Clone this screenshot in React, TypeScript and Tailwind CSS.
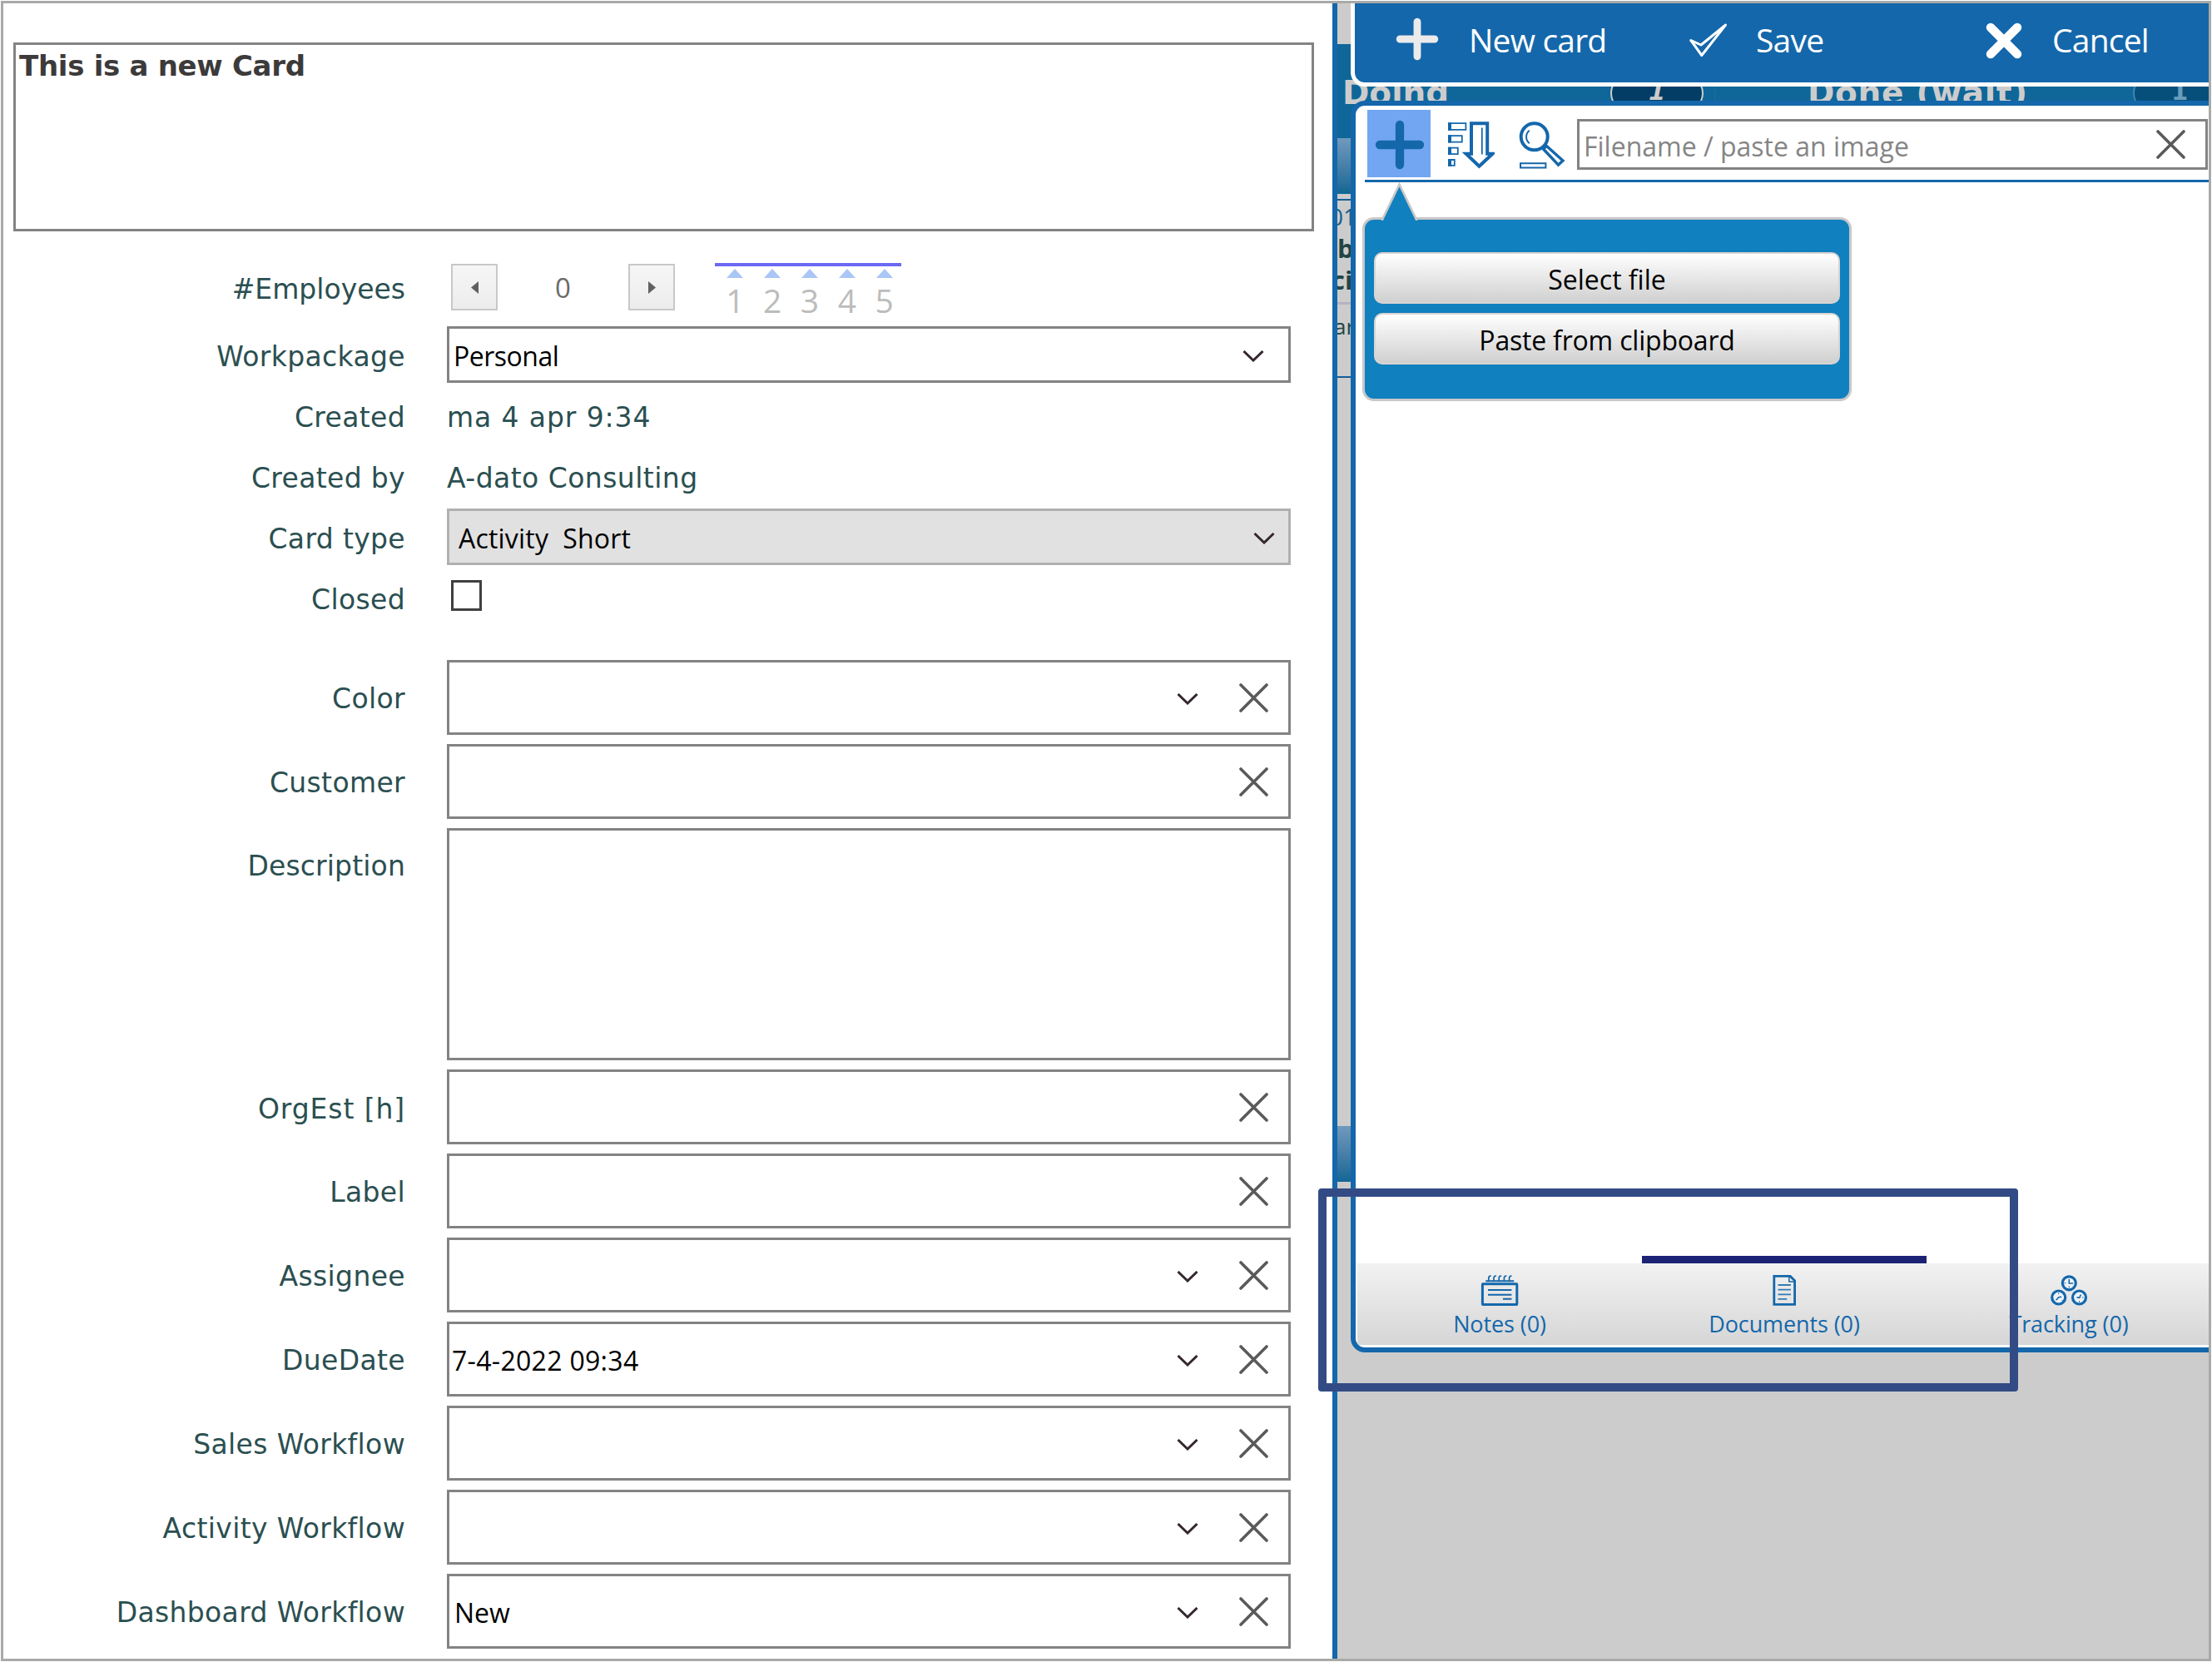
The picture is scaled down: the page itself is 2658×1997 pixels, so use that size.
import type { ReactNode } from "react";

type FieldRow = {
  label: string;
  labelClass?: string;
  value?: string;
  valueClass?: string;
  dropdown?: boolean;
  tall?: boolean;
};

const customFields: FieldRow[] = [
  { label: "Color", dropdown: true },
  { label: "Customer" },
  { label: "Description", labelClass: "h-[86px] tracking-[0.15px]", tall: true },
  { label: "OrgEst [h]", labelClass: "h-[90px] tracking-[0.9px]" },
  { label: "Label" },
  { label: "Assignee", dropdown: true },
  { label: "DueDate", value: "7-4-2022 09:34", valueClass: "pl-[3px] tracking-[0.3px]", dropdown: true },
  { label: "Sales Workflow", dropdown: true },
  { label: "Activity Workflow", dropdown: true },
  { label: "Dashboard Workflow", value: "New", valueClass: "pl-[6px]", dropdown: true },
];

function ChevronIcon() {
  return (
    <svg width="26" height="14" viewBox="0 0 26 14" fill="none" stroke="#35262f" strokeWidth="3">
      <path d="M1.5 1 13 12 24.5 1" />
    </svg>
  );
}

function ClearIcon() {
  return (
    <svg width="35" height="35" viewBox="0 0 35 35" fill="none" stroke="#5a5a5a" strokeWidth="3.6" strokeLinecap="round">
      <path d="M2 2 33 33M33 2 2 33" />
    </svg>
  );
}

function PlusIcon({ className, width }: { className: string; width: number }) {
  return (
    <svg className={className} viewBox="0 0 50 50" preserveAspectRatio="none" fill="none" stroke="currentColor" strokeWidth={width} strokeLinecap="round">
      <path d="M25 5v40M5 25h40" />
    </svg>
  );
}

function CheckIcon() {
  return (
    <svg width="46" height="41" viewBox="0 0 46 41" fill="none" stroke="#fff" strokeWidth="3" strokeLinejoin="round">
      <path d="M1.8 20.5 14 26 43.5 2 14.8 38.5Z" />
    </svg>
  );
}

function CancelIcon() {
  return (
    <svg width="44" height="44" viewBox="0 0 44 44" fill="none" stroke="#fff" strokeWidth="10.5" strokeLinecap="round">
      <path d="M6 6 38 38M38 6 6 38" />
    </svg>
  );
}

function SortIcon() {
  return (
    <svg width="58" height="60" viewBox="0 0 58 60" fill="none" stroke="#1467ab">
      <g strokeWidth="1.8">
        <path d="M3 4.2h20.4v7.6H3zM3 19.2h15.8v7.4H3zM3 33.6h10.8v7.6H3zM3 48h6.8v6.8H3z" />
      </g>
      <path strokeWidth="4" d="M4 3.3v9.4M4 18.3v9.2M4 32.7v9.4M4 47.1v8.6" />
      <path strokeWidth="4" d="M30 4.3h19.2v36.5h6.3L39.4 55.8 23.6 40.8H30z" />
      <path strokeWidth="1.8" d="M42.8 9.5v32" />
    </svg>
  );
}

function SearchIcon() {
  return (
    <svg width="58" height="60" viewBox="0 0 58 60" fill="none" stroke="#1467ab">
      <circle cx="19.7" cy="20.3" r="16" strokeWidth="4" />
      <path strokeWidth="2" d="M13.8 12.8c-5 4-5 11.5 0 15.4" />
      <path strokeWidth="3.4" d="M30.5 35 34.5 31.5 54 49 48.5 54.2z" />
      <path strokeWidth="2" d="M3 52.2h30.4v5.2H3z" />
    </svg>
  );
}

function NotesIcon() {
  return (
    <svg width="48" height="39" viewBox="0 0 48 39" fill="none" stroke="#1467ab">
      <rect x="3.4" y="11.8" width="41.4" height="24.6" rx="0.5" strokeWidth="3" />
      <path strokeWidth="2" d="M7.2 8.3h34M10 19h28.4M10 24.7h28.4M28 29.8h10.4" />
      <path
        strokeWidth="1.7"
        d="M10.8 8.5V4.6q0-2.6 3-2.6M17 8.5V4.6q0-2.6 3-2.6M23.2 8.5V4.6q0-2.6 3-2.6M29.4 8.5V4.6q0-2.6 3-2.6M35.6 8.5V4.6q0-2.6 3-2.6"
      />
    </svg>
  );
}

function DocumentIcon() {
  return (
    <svg width="31" height="39" viewBox="0 0 31 39" fill="none" stroke="#1467ab">
      <path strokeWidth="2.8" d="M2.8 2.4h19.4l5.4 5.4v28.6H2.8z" />
      <path strokeWidth="1.5" d="M20.8 3v6h6" />
      <path strokeWidth="1.8" opacity="0.85" d="M7.5 13H23M7.5 18.7H23M7.5 24.3H23M7.5 29.8h10.7" />
    </svg>
  );
}

function TrackingIcon() {
  return (
    <svg width="46" height="39" viewBox="0 0 46 39" fill="none" stroke="#1467ab">
      <g fill="#eef3f8" strokeWidth="3.2">
        <circle cx="23.3" cy="10.8" r="8" />
        <circle cx="10.7" cy="28" r="8" />
        <circle cx="35.5" cy="28" r="8" />
      </g>
      <path strokeWidth="1.6" d="M23.3 6v5h4.8M7.6 31.2l3.2-3.4 3.4-.6M32.4 28l3.4.3 1.6-3.8" />
      <path strokeWidth="1" d="M23.3 14.4v2M17.6 10.8h1.8M10.7 22.6v1.6M14.6 31l1 1M35.5 32v1.8M38.8 28h1.8" />
    </svg>
  );
}

function Label({ children, className = "h-[68px] tracking-[0.35px]" }: { children: ReactNode; className?: string }) {
  return (
    <div
      className={`flex w-[483px] shrink-0 items-center justify-end pt-[5px] font-['DejaVu_Sans',sans-serif] text-[33px] whitespace-nowrap text-[#2b4f51] ${className}`}
    >
      {children}
    </div>
  );
}

function StepButton({ direction }: { direction: "left" | "right" }) {
  return (
    <button className="flex size-14 items-center justify-center border-2 border-[#c8c8c8] bg-linear-to-b from-[#f6f6f6] to-[#ececec]">
      <svg width="9" height="15" viewBox="0 0 9 15" fill="#606060">
        <path d={direction === "left" ? "M9 0v15L0 7.5z" : "M0 0v15l9-7.5z"} />
      </svg>
    </button>
  );
}

function CardForm() {
  return (
    <section className="w-[1597px] shrink-0 bg-white font-['Open_Sans',sans-serif] text-[32px] text-black">
      <div className="mt-[47px] ml-3 h-[227px] w-[1563px] border-3 border-[#838383] pt-[5px] pl-1 font-['DejaVu_Sans',sans-serif] text-[34px] leading-10 font-bold tracking-[-0.3px] text-[#3c3a3a]">
        This is a new Card
      </div>

      <div className="mt-[39px] flex h-[75px] items-start">
        <Label className="h-14">#Employees</Label>
        <div className="ml-[55px] flex items-center">
          <StepButton direction="left" />
          <span className="w-[157px] pt-[2px] text-center text-[33px] leading-[54px] text-[#6a6a6a]">0</span>
          <StepButton direction="right" />
        </div>
        <div className="-mt-px ml-12 w-[224px] border-t-4 border-[#6b69f4]">
          <div className="mt-[3px] flex pl-[2px] text-[39px] text-[#bcbcbc]">
            {[1, 2, 3, 4, 5].map((n) => (
              <div key={n} className="flex w-[44.8px] shrink-0 flex-col items-center">
                <svg width="20" height="11" viewBox="0 0 20 11" fill="#a9c6f5">
                  <path d="M10 0 20 11H0z" />
                </svg>
                <span className="mt-[7px] leading-10">{n}</span>
              </div>
            ))}
          </div>
        </div>
      </div>

      <div className="flex flex-col gap-[5px]">
        <div className="flex">
          <Label>Workpackage</Label>
          <div className="ml-[50px] flex h-[68px] w-[1014px] items-center justify-between border-3 border-[#838383] pt-[3px] pr-[29px] pl-[5px] tracking-[-0.5px]">
            Personal
            <ChevronIcon />
          </div>
        </div>
        <div className="flex text-[#2b4f51]">
          <Label>Created</Label>
          <div className="ml-[50px] flex items-center pt-[5px] font-['DejaVu_Sans',sans-serif] text-[33px] tracking-[0.9px]">ma 4 apr 9:34</div>
        </div>
        <div className="flex text-[#2b4f51]">
          <Label>Created by</Label>
          <div className="ml-[50px] flex items-center pt-[5px] font-['DejaVu_Sans',sans-serif] text-[33px] tracking-[0.45px]">A-dato Consulting</div>
        </div>
        <div className="flex">
          <Label>Card type</Label>
          <div className="ml-[50px] flex h-[68px] w-[1014px] items-center justify-between border-3 border-[#b0b0b0] bg-[#e1e1e1] pt-[3px] pr-4 pl-[11px] tracking-[0.2px] whitespace-pre">
            {"Activity  Short"}
            <ChevronIcon />
          </div>
        </div>
        <div className="flex items-center">
          <Label>Closed</Label>
          <div className="mb-[5px] ml-[55px] size-[37px] border-3 border-[#404040]" />
        </div>
      </div>

      <div className="mt-[41px] flex flex-col gap-[11px]">
        {customFields.map(({ label, labelClass = "h-[89px] tracking-[0.35px]", value, valueClass = "", dropdown, tall }) => (
          <div key={label} className="flex">
            <Label className={labelClass}>{label}</Label>
            {tall ? (
              <div className="ml-[50px] h-[279px] w-[1014px] border-3 border-[#838383]" />
            ) : (
              <div className="ml-[50px] flex h-[90px] w-[1014px] items-center border-3 border-[#838383] pr-6">
                <span className={`flex-1 pt-[3px] ${valueClass}`}>{value}</span>
                {dropdown && (
                  <span className="mt-[3px] mr-[49px]">
                    <ChevronIcon />
                  </span>
                )}
                <ClearIcon />
              </div>
            )}
          </div>
        ))}
      </div>
    </section>
  );
}

/** Kanban board that shows through behind the docked panels. */
function BoardBackdrop() {
  return (
    <div className="col-start-1 row-start-1 flex flex-col overflow-hidden bg-[#ccc] pt-[49px] font-['DejaVu_Sans',sans-serif]">
      <div className="flex h-[113px] shrink-0 items-center bg-[#0f6699] pt-[5px] text-[39px] font-bold whitespace-nowrap text-[#ccc]">
        <div className="flex h-full w-[454px] shrink-0 items-center justify-between border-r border-[#1b6f9f] pr-[13px] pl-[6px]">
          <span>Doing</span>
          <span className="flex h-11 w-28 items-center justify-center rounded-[22px] border-2 border-[#ccc] bg-[#033d66] pb-[3px] text-[29px] italic">1</span>
        </div>
        <div className="flex shrink-0 items-center pl-[111px]">
          <span className="w-[391px] tracking-[0.7px]">Done (wait)</span>
          <span className="flex h-11 w-28 items-center justify-center rounded-[22px] border-2 border-[#3f86ae] bg-[#074f7b] pb-[3px] text-[29px] text-[#6a9dbb]">1</span>
        </div>
      </div>
      <div className="h-[67px] shrink-0 bg-linear-to-b from-[#7099bd] to-[#0f6694]" />
      <div className="mt-1.5 h-[215px] shrink-0 border-y-[2.5px] border-[#165f97] font-['Open_Sans',sans-serif] whitespace-nowrap text-[#234442]">
        <p className="-ml-[9px] text-[28px] leading-[38px] text-[#15608c]">01</p>
        <p className="text-[31px] leading-[38px] font-bold">b</p>
        <p className="-ml-[7px] text-[31px] leading-[38px] font-bold">ci</p>
        <p className="mt-2 -ml-1 border-t-[3px] border-[#b5b3c3] text-[26px] leading-[52px]">ar</p>
      </div>
      <div className="mt-[899px] h-[67px] shrink-0 bg-linear-to-b from-[#7099bd] to-[#0f6694]" />
    </div>
  );
}

function UploadMenu() {
  return (
    <div className="absolute top-[134px] left-[8px] h-[221px] w-[588px] rounded-[14px] border-[3px] border-[#c8c8c8] bg-[#1080bf] px-[11px] pt-[39px]">
      <svg className="absolute -top-[45px] left-[18px]" width="48" height="46" viewBox="0 0 48 46">
        <path d="M2.5 46 23.5 2.5 44.5 46" fill="#1080bf" stroke="#c8c8c8" strokeWidth="2.6" />
      </svg>
      <div className="flex flex-col gap-[11px] text-[32px] text-black">
        <button className="h-[62px] w-[560px] rounded-[10px] border-2 border-[#d8d4d2] bg-linear-to-b from-white to-[#d0d0d0] pt-1">Select file</button>
        <button className="h-[62px] w-[560px] rounded-[10px] border-2 border-[#d8d4d2] bg-linear-to-b from-white to-[#d0d0d0] pt-1 tracking-[-0.2px]">
          Paste from clipboard
        </button>
      </div>
    </div>
  );
}

function BottomTab({ icon, label, active }: { icon: ReactNode; label: string; active?: boolean }) {
  return (
    <div className="relative flex w-[342px] shrink-0 flex-col items-center pt-[13px]">
      {active && <div className="absolute inset-x-0 -top-[9px] h-[9px] bg-[#1c2274]" />}
      {icon}
      <span className="mt-[3px] text-[27px] leading-9 tracking-[-0.1px] text-[#1467ab]">{label}</span>
    </div>
  );
}

function DetailPanel() {
  return (
    <div className="z-10 col-start-1 row-start-1 ml-4 flex flex-col font-['Open_Sans',sans-serif]">
      <div className="flex h-[100px] shrink-0 rounded-bl-[17px] border-b-[5px] border-l-[5px] border-white bg-[#1467ab] pb-[6px] pl-[49px] text-[39px] tracking-[-0.8px] whitespace-nowrap text-white">
        <div className="flex w-[353px] items-center">
          <PlusIcon className="mb-1 size-[52px] text-[#ebebeb]" width={8.5} />
          <span className="-mt-px ml-9">New card</span>
        </div>
        <div className="flex w-[356px] items-center">
          <CheckIcon />
          <span className="-mt-px ml-[34px]">Save</span>
        </div>
        <div className="flex items-center">
          <CancelIcon />
          <span className="-mt-px ml-[36px]">Cancel</span>
        </div>
      </div>

      <div className="relative mt-[17px] flex h-[1504px] shrink-0 flex-col overflow-hidden rounded-l-[17px] border-y-[6px] border-l-[6px] border-[#1467ab] bg-white">
        <div className="ml-[11px] flex h-[92px] shrink-0 items-start border-b-[3px] border-[#1467ab] pt-[5px]">
          <div className="ml-[3px] flex h-[81px] w-[76px] items-center justify-center bg-[#72a6f2] pt-[3px] pl-[2px] text-[#1467ab]">
            <PlusIcon className="h-[60px] w-[60px]" width={8.6} />
          </div>
          <div className="mt-3 ml-[19px] flex gap-7">
            <SortIcon />
            <SearchIcon />
          </div>
          <div className="mt-[11px] ml-[13px] flex h-[61px] w-[758px] items-center justify-between border-3 border-[#838383] pr-6 pl-[5px] text-[32px] text-[#858585]">
            <span className="pt-1">Filename / paste an image</span>
            <ClearIcon />
          </div>
        </div>
        <UploadMenu />
        <div className="mt-auto mb-[3px] ml-[2px] flex h-[98px] bg-linear-to-b from-[#f2f2f2] to-[#d6d6d6]">
          <BottomTab icon={<NotesIcon />} label="Notes (0)" />
          <BottomTab icon={<DocumentIcon />} label="Documents (0)" active />
          <BottomTab icon={<TrackingIcon />} label="Tracking (0)" />
        </div>
      </div>
    </div>
  );
}

export default function App() {
  return (
    <div className="relative h-[1997px] w-[2658px] overflow-hidden bg-white p-px">
      <div className="flex h-full w-full overflow-hidden border-[3px] border-[#a8aaa8]">
        <CardForm />
        <div className="w-1.5 shrink-0 bg-[#1467ab]" />
        <div className="grid min-w-0 flex-1 grid-cols-[minmax(0,1fr)] grid-rows-[minmax(0,1fr)] overflow-hidden">
          <BoardBackdrop />
          <DetailPanel />
        </div>
      </div>
      {/* callout around the bottom tabs */}
      <div className="absolute top-[1428px] left-[1584px] z-20 h-[244px] w-[841px] rounded-[4px] border-[10px] border-[#334b84]" />
    </div>
  );
}
